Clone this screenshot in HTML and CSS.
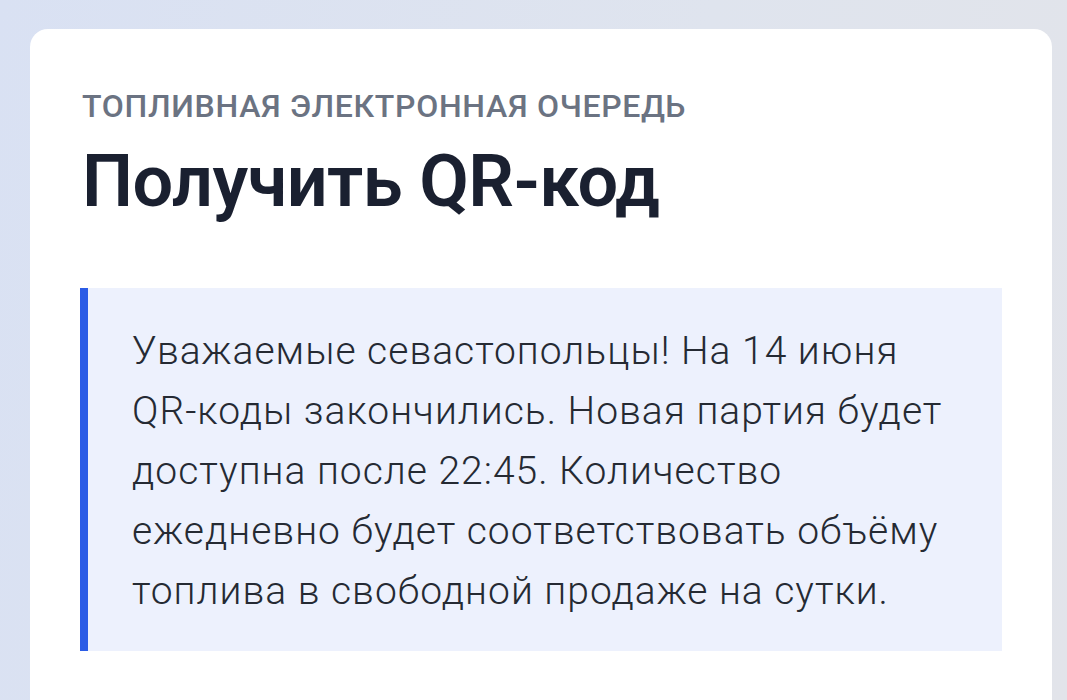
FILE: index.html
```html
<!DOCTYPE html>
<html lang="ru">
<head>
<meta charset="utf-8">
<link rel="stylesheet" href="styles.css">
</head>
<body>
<main class="card">
  <p class="eyebrow">ТОПЛИВНАЯ ЭЛЕКТРОННАЯ ОЧЕРЕДЬ</p>
  <h1 class="title">Получить QR-код</h1>
  <div class="notice">
    <p>Уважаемые севастопольцы! На 14 июня QR-коды закончились. Новая партия будет доступна после 22:45. Количество ежедневно будет соответствовать объёму топлива в свободной продаже на сутки.</p>
  </div>
</main>
</body>
</html>
```

FILE: styles.css
```css
html, body {
  margin: 0;
  height: 100%;
}
body {
  background: linear-gradient(100deg, #d9e1f3 0%, #dfe4ee 60%, #e2e4ea 100%);
  font-family: Roboto, "Noto Sans", sans-serif;
  padding: 29px 15px 0 30px;
  box-sizing: border-box;
  overflow: hidden;
}
.card {
  background: #ffffff;
  border-radius: 18px 18px 0 0;
  height: 100%;
  box-sizing: border-box;
  padding: 57px 50px 0 52px;
}
.eyebrow {
  margin: 0;
  font-size: 32px;
  line-height: 40px;
  font-weight: 500;
  color: #6b7382;
  letter-spacing: 0.7px;
}
.title {
  margin: 13px 0 0;
  font-size: 72px;
  line-height: 86px;
  font-weight: 600;
  color: #1a2030;
  letter-spacing: -0.6px;
}
.notice {
  margin-top: 63px;
  margin-left: -2px;
  background: #edf1fd;
  border-left: 8px solid #2b5ce6;
  padding: 33px 40px 30px 44px;
}
.notice p {
  margin: 0;
  font-size: 39px;
  line-height: 60px;
  font-weight: 300;
  color: #252a33;
  letter-spacing: 1px;
}
```
